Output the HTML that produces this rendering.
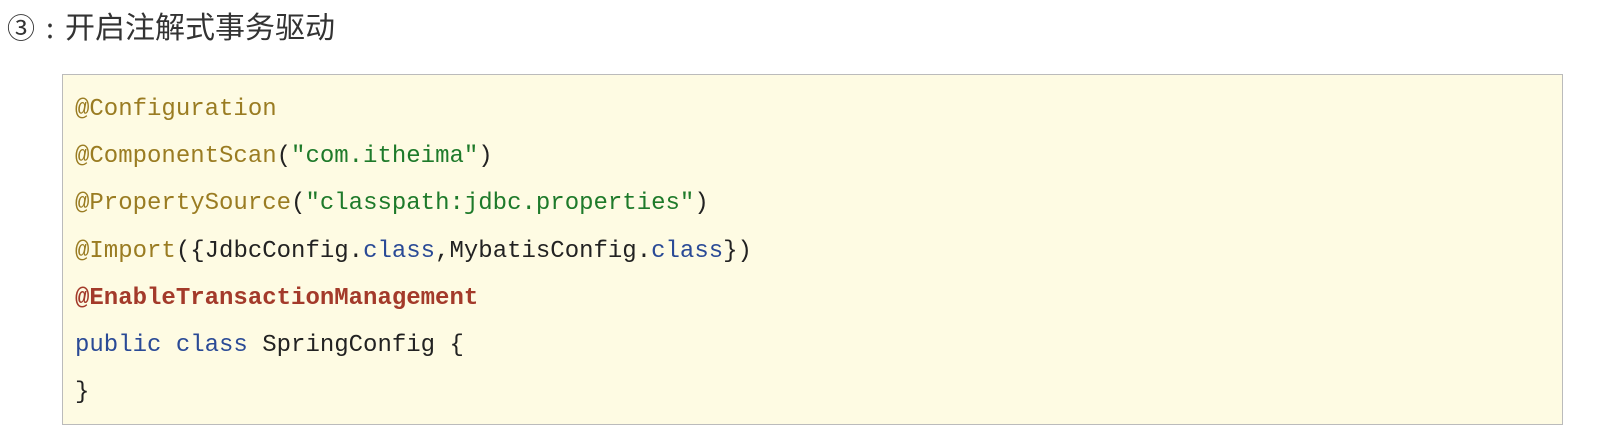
<!DOCTYPE html>
<html><head><meta charset="utf-8"><style>
html,body{margin:0;padding:0;background:#fff;width:1605px;height:432px;overflow:hidden}
.h{position:absolute;left:7px;top:5px;font:28px/40px "Liberation Sans","Noto Sans CJK SC",sans-serif;color:#333;white-space:nowrap}
.h .c{font:30px/40px "Noto Sans CJK SC",sans-serif}
.h .col{font:28px/40px "Noto Sans CJK SC",sans-serif;display:inline-block;width:30px;text-align:center}
.box{position:absolute;left:62px;top:74px;width:1501px;height:351px;background:#fefbe3;border:1px solid #bbb;box-sizing:border-box}
pre{margin:0;position:absolute;left:12px;top:11px;font:24px/47.2px "Liberation Mono",monospace;color:#222}
.a{color:#9a7c22}.s{color:#1e7a2a}.k{color:#2a4a96}.e{color:#a33a2a;font-weight:bold}
</style></head><body>
<div class="h">③<span class="col">:</span><span class="c">开启注解式事务驱动</span></div>
<div class="box"><pre><span class="a">@Configuration</span>
<span class="a">@ComponentScan</span>(<span class="s">"com.itheima"</span>)
<span class="a">@PropertySource</span>(<span class="s">"classpath:jdbc.properties"</span>)
<span class="a">@Import</span>({JdbcConfig.<span class="k">class</span>,MybatisConfig.<span class="k">class</span>})
<span class="e">@EnableTransactionManagement</span>
<span class="k">public class</span> SpringConfig {
}</pre></div>
</body></html>
